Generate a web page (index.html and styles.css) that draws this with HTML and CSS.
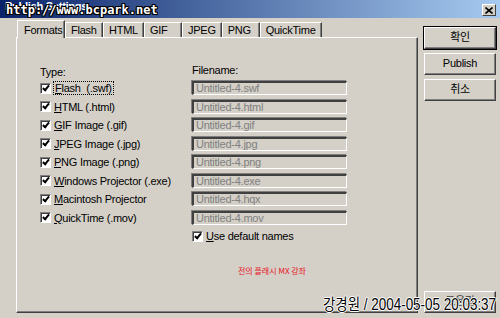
FILE: index.html
```html
<html>
<head>
    <title>Publish Settings</title>
    <link rel="stylesheet" href="styles.css">
</head>
<body>
    <div class="window">
        <div class="titlebar">
            <span class="title">Publish Settings</span>
            <span class="close">
                <svg width="8" height="7" viewBox="0 0 8 7"><path d="M0.5 0.5 L7.5 6.5 M7.5 0.5 L0.5 6.5" stroke="#000" stroke-width="1.6"/></svg>
            </span>
            <span class="mark-url">http://www.bcpark.net</span>
        </div>
        <div class="main">
            <div class="left">
                <div class="tabs">
                    <div class="tab active">Formats</div>
                    <div class="tab">Flash</div>
                    <div class="tab">HTML</div>
                    <div class="tab">GIF</div>
                    <div class="tab">JPEG</div>
                    <div class="tab">PNG</div>
                    <div class="tab">QuickTime</div>
                </div>
                <div class="panel">
                    <div class="form">
                        <div class="head type">Type:</div>
                        <div class="head">Filename:</div>

                        <div class="check"><span class="box"></span><span class="focus"><u>F</u>lash &nbsp;(.swf)</span></div>
                        <div class="field">Untitled-4.swf</div>

                        <div class="check"><span class="box"></span><span><u>H</u>TML (.html)</span></div>
                        <div class="field">Untitled-4.html</div>

                        <div class="check"><span class="box"></span><span><u>G</u>IF Image (.gif)</span></div>
                        <div class="field">Untitled-4.gif</div>

                        <div class="check"><span class="box"></span><span><u>J</u>PEG Image (.jpg)</span></div>
                        <div class="field">Untitled-4.jpg</div>

                        <div class="check"><span class="box"></span><span><u>P</u>NG Image (.png)</span></div>
                        <div class="field">Untitled-4.png</div>

                        <div class="check"><span class="box"></span><span><u>W</u>indows Projector (.exe)</span></div>
                        <div class="field">Untitled-4.exe</div>

                        <div class="check"><span class="box"></span><span><u>M</u>acintosh Projector</span></div>
                        <div class="field">Untitled-4.hqx</div>

                        <div class="check"><span class="box"></span><span><u>Q</u>uickTime (.mov)</span></div>
                        <div class="field">Untitled-4.mov</div>

                        <div></div>
                        <div class="check"><span class="box"></span><span><u>U</u>se default names</span></div>
                    </div>
                    <div class="note">전의 플래시 MX 강좌</div>
                </div>
            </div>
            <div class="side">
                <div class="btn default">확인</div>
                <div class="btn">Publish</div>
                <div class="btn">취소</div>
                <div class="btn help">도움말</div>
            </div>
        </div>
        <div class="mark-date">강경원 / 2004-05-05 20:03:37</div>
    </div>
</body>
</html>
```

FILE: styles.css
```css
body {
    margin: 0;
    background: #d4d0c8;
}

.window {
    position: relative;
    width: 500px;
    height: 318px;
    overflow: hidden;
    background: #d4d0c8;
    font-family: "Liberation Sans", "Noto Sans CJK KR", sans-serif;
    font-size: 11px;
    letter-spacing: -0.25px;
    color: #000;
}

/* title bar */
.titlebar {
    position: relative;
    height: 18px;
    display: flex;
    justify-content: space-between;
    align-items: flex-start;
    background: linear-gradient(90deg, #0a246a, #a6caf0);
}
.title {
    color: #fff;
    font-weight: bold;
    line-height: 12px;
    padding: 0 0 0 5px;
}
.close {
    width: 12px;
    height: 10px;
    margin: 4px 4px 0 0;
    display: flex;
    align-items: center;
    justify-content: center;
    background: #d4d0c8;
    border-top: 1px solid #fff;
    border-left: 1px solid #fff;
    border-right: 1px solid #404040;
    border-bottom: 1px solid #404040;
}
.mark-url {
    position: absolute;
    left: 6px;
    top: 4px;
    font-family: "DejaVu Sans Mono", monospace;
    font-weight: bold;
    font-size: 12px;
    letter-spacing: 0;
    line-height: 13px;
    color: #fff;
    text-shadow: 1px 0 #000, -1px 0 #000, 0 1px #000, 0 -1px #000,
                 1px 1px #000, -1px -1px #000, 1px -1px #000, -1px 1px #000;
}

/* body */
.main {
    display: flex;
    height: 300px;
}
.left {
    width: 418px;
    padding: 2px 0 0 16px;
    box-sizing: border-box;
}

.tabs {
    display: flex;
    align-items: flex-end;
    height: 17px;
    padding-left: 1px;
}
.tab {
    min-width: 38px;
    height: 15px;
    box-sizing: border-box;
    padding: 0 5px;
    line-height: 14px;
    border-top: 1px solid #fff;
    border-left: 1px solid #fff;
    border-right: 1px solid #404040;
    box-shadow: inset -1px 0 #808080;
}
.tab.active {
    position: relative;
    z-index: 1;
    width: 48px;
    height: 18px;
    margin-bottom: -1px;
    padding: 2px 0 0 6px;
    background: #d4d0c8;
}

.panel {
    width: 402px;
    height: 276px;
    box-sizing: border-box;
    padding: 26px 0 0 23px;
    border-top: 1px solid #fff;
    border-left: 1px solid #fff;
    border-right: 1px solid #404040;
    border-bottom: 1px solid #404040;
    box-shadow: inset -1px -1px #808080;
}

.form {
    display: grid;
    grid-template-columns: 152px 155px;
    grid-template-rows: 15px;
    grid-auto-rows: 18.5px;
    align-items: center;
}
.head {
    align-self: start;
    line-height: 13px;
}
.head.type {
    padding-top: 2px;
}

.check {
    display: flex;
    align-items: center;
    gap: 3px;
}
.box {
    position: relative;
    width: 11px;
    height: 11px;
    box-sizing: border-box;
    background: #fff;
    border-top: 1px solid #808080;
    border-left: 1px solid #808080;
    border-right: 1px solid #fff;
    border-bottom: 1px solid #fff;
    box-shadow: inset 1px 1px #404040;
}
.box::after {
    content: "";
    position: absolute;
    left: 3px;
    top: 0px;
    width: 2px;
    height: 5px;
    border-right: 2px solid #000;
    border-bottom: 2px solid #000;
    transform: rotate(40deg);
}
.focus {
    outline: 1px dotted #000;
    padding: 0 1px;
    line-height: 12px;
}

.field {
    height: 14px;
    box-sizing: border-box;
    padding-left: 2px;
    line-height: 11px;
    color: #808080;
    white-space: nowrap;
    border-top: 2px solid #404040;
    border-left: 2px solid #404040;
    border-right: 1px solid #fff;
    border-bottom: 1px solid #fff;
    box-shadow: -1px -1px #808080;
}

.note {
    margin-top: 20px;
    padding-left: 198px;
    font-family: "Noto Sans CJK KR", sans-serif;
    font-size: 8px;
    line-height: 10px;
    letter-spacing: 0;
    color: #e8101c;
}

/* buttons */
.side {
    width: 82px;
    padding: 9px 0 5px 6px;
    box-sizing: border-box;
    display: flex;
    flex-direction: column;
    gap: 4px;
}
.btn {
    width: 72px;
    height: 22px;
    box-sizing: border-box;
    text-align: center;
    line-height: 19px;
    border-top: 1px solid #fff;
    border-left: 1px solid #fff;
    border-right: 1px solid #404040;
    border-bottom: 1px solid #404040;
    box-shadow: inset -1px -1px #808080;
}
.btn.default {
    outline: 1px solid #000;
    outline-offset: 0;
}
.btn.help {
    margin-top: auto;
    color: #404040;
}

.mark-date {
    position: absolute;
    right: 4px;
    bottom: 5px;
    font-family: "Liberation Sans", "Noto Sans CJK KR", sans-serif;
    font-size: 16px;
    line-height: 16px;
    letter-spacing: 0;
    color: #000;
    white-space: nowrap;
    transform: scaleX(0.84);
    transform-origin: right center;
    text-shadow: 1px 0 #fff, -1px 0 #fff, 0 1px #fff, 0 -1px #fff;
}
```
